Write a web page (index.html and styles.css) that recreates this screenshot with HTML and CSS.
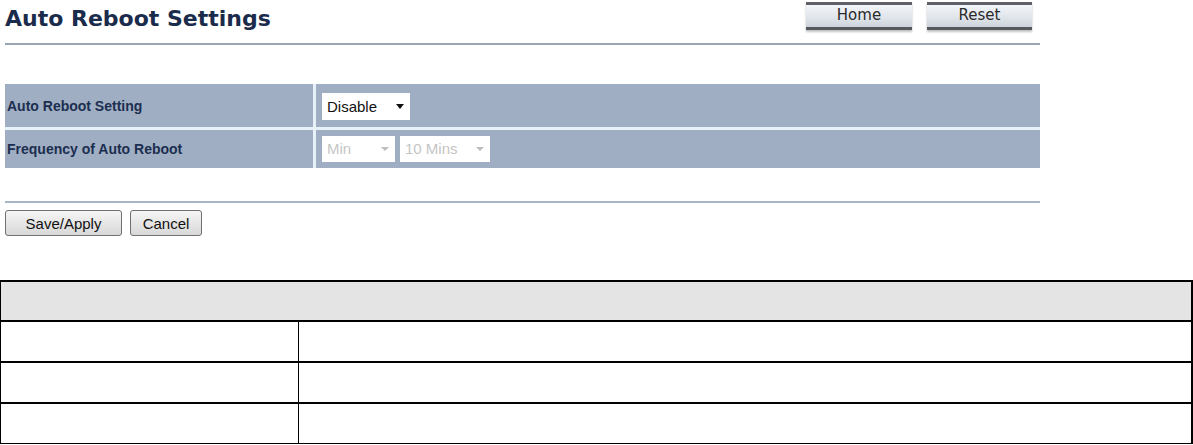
FILE: index.html
```html
<!DOCTYPE html>
<html>
<head>
<meta charset="utf-8">
<title>Auto Reboot Settings</title>
<link rel="stylesheet" href="styles.css">
</head>
<body>
<div class="page">
  <div class="header">
    <h1 class="title">Auto Reboot Settings</h1>
    <div class="nav">
      <div class="navbtn">Home</div>
      <div class="navbtn">Reset</div>
    </div>
  </div>

  <div class="settings">
    <div class="label row1">Auto Reboot Setting</div>
    <div class="value row1">
      <div class="sel sel-disable">Disable<span class="arrow"></span></div>
    </div>
    <div class="label row2">Frequency of Auto Reboot</div>
    <div class="value row2">
      <div class="sel sel-off sel-min">Min<span class="arrow"></span></div>
      <div class="sel sel-off sel-mins">10 Mins<span class="arrow"></span></div>
    </div>
  </div>

  <div class="rule"></div>

  <div class="actions">
    <button class="btn btn-save">Save/Apply</button>
    <button class="btn btn-cancel">Cancel</button>
  </div>
</div>

<table class="info">
  <colgroup>
    <col class="col1">
    <col class="col2">
  </colgroup>
  <tr class="info-head"><td colspan="2"></td></tr>
  <tr><td class="c1"></td><td></td></tr>
  <tr><td class="c1"></td><td></td></tr>
  <tr><td class="c1"></td><td></td></tr>
</table>
</body>
</html>
```

FILE: styles.css
```css
html, body {
  margin: 0;
  padding: 0;
  background: #ffffff;
}

.page {
  width: 1035px;
  margin-left: 5px;
  font-family: "Liberation Sans", Arial, sans-serif;
}

.header {
  height: 43px;
  display: flex;
  justify-content: space-between;
  align-items: flex-start;
  border-bottom: 2px solid #9ba6b2;
}

.title {
  margin: 0;
  padding-top: 6px;
  font-family: "DejaVu Sans", Verdana, sans-serif;
  font-weight: bold;
  font-size: 22px;
  line-height: 26px;
  color: #1b2b4b;
}

.nav {
  display: flex;
  gap: 15px;
  margin-top: 2px;
  margin-right: 8px;
}

.navbtn {
  width: 105px;
  height: 22px;
  box-sizing: content-box;
  border-top: 3px solid #5e6166;
  border-bottom: 3px solid #55585d;
  background: linear-gradient(#f3f5f8, #dfe4ea 60%, #cdd3db);
  box-shadow: 0 2px 2px rgba(0, 0, 0, 0.25);
  text-align: center;
  font-family: "DejaVu Sans", sans-serif;
  font-size: 15px;
  line-height: 20px;
  color: #2a2a2a;
}

.navbtn:first-child {
  width: 106px;
}

.settings {
  margin-top: 39px;
  display: grid;
  grid-template-columns: 308px 1fr;
  grid-template-rows: 43px 38px;
  column-gap: 3px;
  row-gap: 3px;
  background: #e9f1f8;
}

.label {
  background: #a0aec3;
  display: flex;
  align-items: center;
  padding-left: 2px;
  font-size: 14px;
  font-weight: bold;
  color: #1c2e4f;
}

.value {
  background: #a0aec3;
  display: flex;
  align-items: center;
  gap: 5px;
  padding-left: 6px;
}

.sel {
  position: relative;
  box-sizing: border-box;
  height: 27px;
  background: #ffffff;
  padding-left: 5px;
  font-size: 15px;
  line-height: 27px;
  color: #111111;
}

.sel-disable {
  width: 88px;
  margin-top: 2px;
}

.sel-off {
  height: 26px;
  line-height: 26px;
  color: #c5c5c5;
}

.sel-min {
  width: 73px;
}

.sel-mins {
  width: 90px;
}

.arrow {
  position: absolute;
  right: 6px;
  top: 11px;
  width: 0;
  height: 0;
  border-left: 4px solid transparent;
  border-right: 4px solid transparent;
  border-top: 5px solid #111111;
}

.sel-off .arrow {
  border-top-color: #bdbdbd;
  border-top-width: 4px;
}

.rule {
  margin-top: 33px;
  height: 2px;
  background: #a9b6c7;
}

.actions {
  margin-top: 7px;
  display: flex;
  gap: 8px;
}

.btn {
  height: 26px;
  margin: 0;
  padding: 0;
  border: 1px solid #707070;
  border-radius: 3px;
  background: linear-gradient(#f6f6f6, #e6e6e6 50%, #d8d8d8);
  font-family: "Liberation Sans", Arial, sans-serif;
  font-size: 15px;
  color: #111111;
}

.btn-save {
  width: 117px;
}

.btn-cancel {
  width: 72px;
}

.info {
  margin-top: 44px;
  width: 1193px;
  border-collapse: collapse;
  table-layout: fixed;
  border-left: 1px solid #000;
  border-right: 2px solid #000;
  border-top: 2px solid #000;
  border-bottom: 1px solid #000;
}

.info .col1 {
  width: 298px;
}

.info td {
  height: 39px;
  padding: 0;
  border-top: 2px solid #000;
}

.info .c1 {
  border-right: 1px solid #000;
}

.info-head td {
  background: #e4e4e4;
  height: 38px;
}
```
